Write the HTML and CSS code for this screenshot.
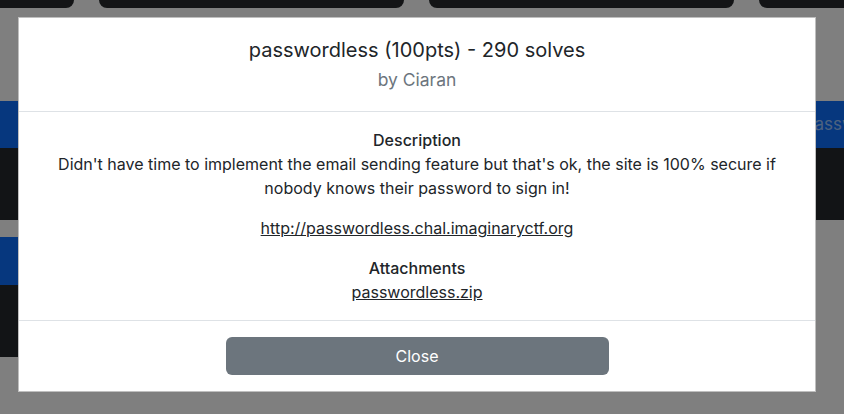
FILE: index.html
```html
<!DOCTYPE html>
<html lang="en">
<head>
<meta charset="utf-8">
<title>passwordless</title>
<link rel="stylesheet" href="styles.css">
</head>
<body>
<div class="page">
  <div class="row row-top">
    <div class="card-top"></div>
    <div class="card-top"></div>
    <div class="card-top"></div>
    <div class="card-top"></div>
  </div>
  <div class="row row-a">
    <div class="card"><div class="card-head"></div><div class="card-body"></div></div>
    <div class="card"><div class="card-head"></div><div class="card-body"></div></div>
    <div class="card"><div class="card-head"></div><div class="card-body"></div></div>
    <div class="card"><div class="card-head">passwordless</div><div class="card-body"></div></div>
  </div>
  <div class="row row-b">
    <div class="card"><div class="card-head tall"></div><div class="card-body"></div></div>
    <div class="card"><div class="card-head tall"></div><div class="card-body"></div></div>
    <div class="card"><div class="card-head tall"></div><div class="card-body"></div></div>
  </div>
</div>

<div class="backdrop">
  <div class="modal">
    <div class="modal-header">
      <h5 class="modal-title">passwordless (100pts) - 290 solves</h5>
      <div class="modal-author">by Ciaran</div>
    </div>
    <div class="modal-body">
      <div class="section-title">Description</div>
      <p class="desc">Didn't have time to implement the email sending feature but that's ok, the site is 100% secure if nobody knows their password to sign in!</p>
      <p class="link-line"><a href="#">http://passwordless.chal.imaginaryctf.org</a></p>
      <div class="section-title">Attachments</div>
      <div><a href="#">passwordless.zip</a></div>
    </div>
    <div class="modal-footer">
      <button class="btn-close">Close</button>
    </div>
  </div>
</div>
</body>
</html>
```

FILE: styles.css
```css
* { box-sizing: border-box; }
html, body {
  margin: 0;
  padding: 0;
  height: 100%;
  overflow: hidden;
}
body {
  background: #ffffff;
  font-family: Inter, "Noto Sans", "Liberation Sans", sans-serif;
  color: #212529;
}
.page {
  display: flex;
  flex-direction: column;
  margin-left: -231px;
}
.row {
  display: grid;
  grid-template-columns: repeat(4, 305px);
  column-gap: 25px;
}
.row-top { margin-top: -32px; }
.card-top {
  height: 40px;
  background: #26292d;
  border-radius: 8px;
}
.row-a { margin-top: 93px; }
.row-b { margin-top: 17px; }
.card {
  display: flex;
  flex-direction: column;
  border-radius: 8px;
  overflow: hidden;
}
.card-head {
  height: 47px;
  background: #0d6efd;
  color: rgba(255, 255, 255, 0.6);
  font-size: 17px;
  line-height: 47px;
  padding-left: 45px;
  white-space: nowrap;
}
.card-head.tall { height: 48px; line-height: 48px; }
.card-body {
  height: 72px;
  background: #25282c;
}

.backdrop {
  position: fixed;
  inset: 0;
  background: rgba(0, 0, 0, 0.5);
}
.modal {
  position: absolute;
  left: 18px;
  top: 17px;
  width: 798px;
  background: #ffffff;
  border: 1px solid rgba(0, 0, 0, 0.25);
  display: flex;
  flex-direction: column;
  text-align: center;
}
.modal-header {
  padding: 17px 16px 18px;
  border-bottom: 1px solid #dee2e6;
}
.modal-title {
  margin: 0;
  font-size: 20px;
  font-weight: 400;
  line-height: 30px;
  color: #212529;
}
.modal-author {
  margin-top: 2px;
  font-size: 17.5px;
  line-height: 26px;
  color: #6c757d;
}
.modal-body {
  padding: 16px;
  font-size: 16px;
  line-height: 24px;
}
.section-title {
  font-weight: 500;
}
.desc {
  margin: 0 0 16px;
}
.link-line {
  margin: 0 0 16px;
}
.modal-body a {
  color: #212529;
  text-decoration: underline;
}
.modal-footer {
  padding: 16px;
  border-top: 1px solid #dee2e6;
  display: flex;
  justify-content: center;
}
.btn-close {
  width: 383px;
  height: 38px;
  background: #6c757d;
  color: #ffffff;
  border: none;
  border-radius: 6px;
  font-family: inherit;
  font-size: 16px;
}
```
